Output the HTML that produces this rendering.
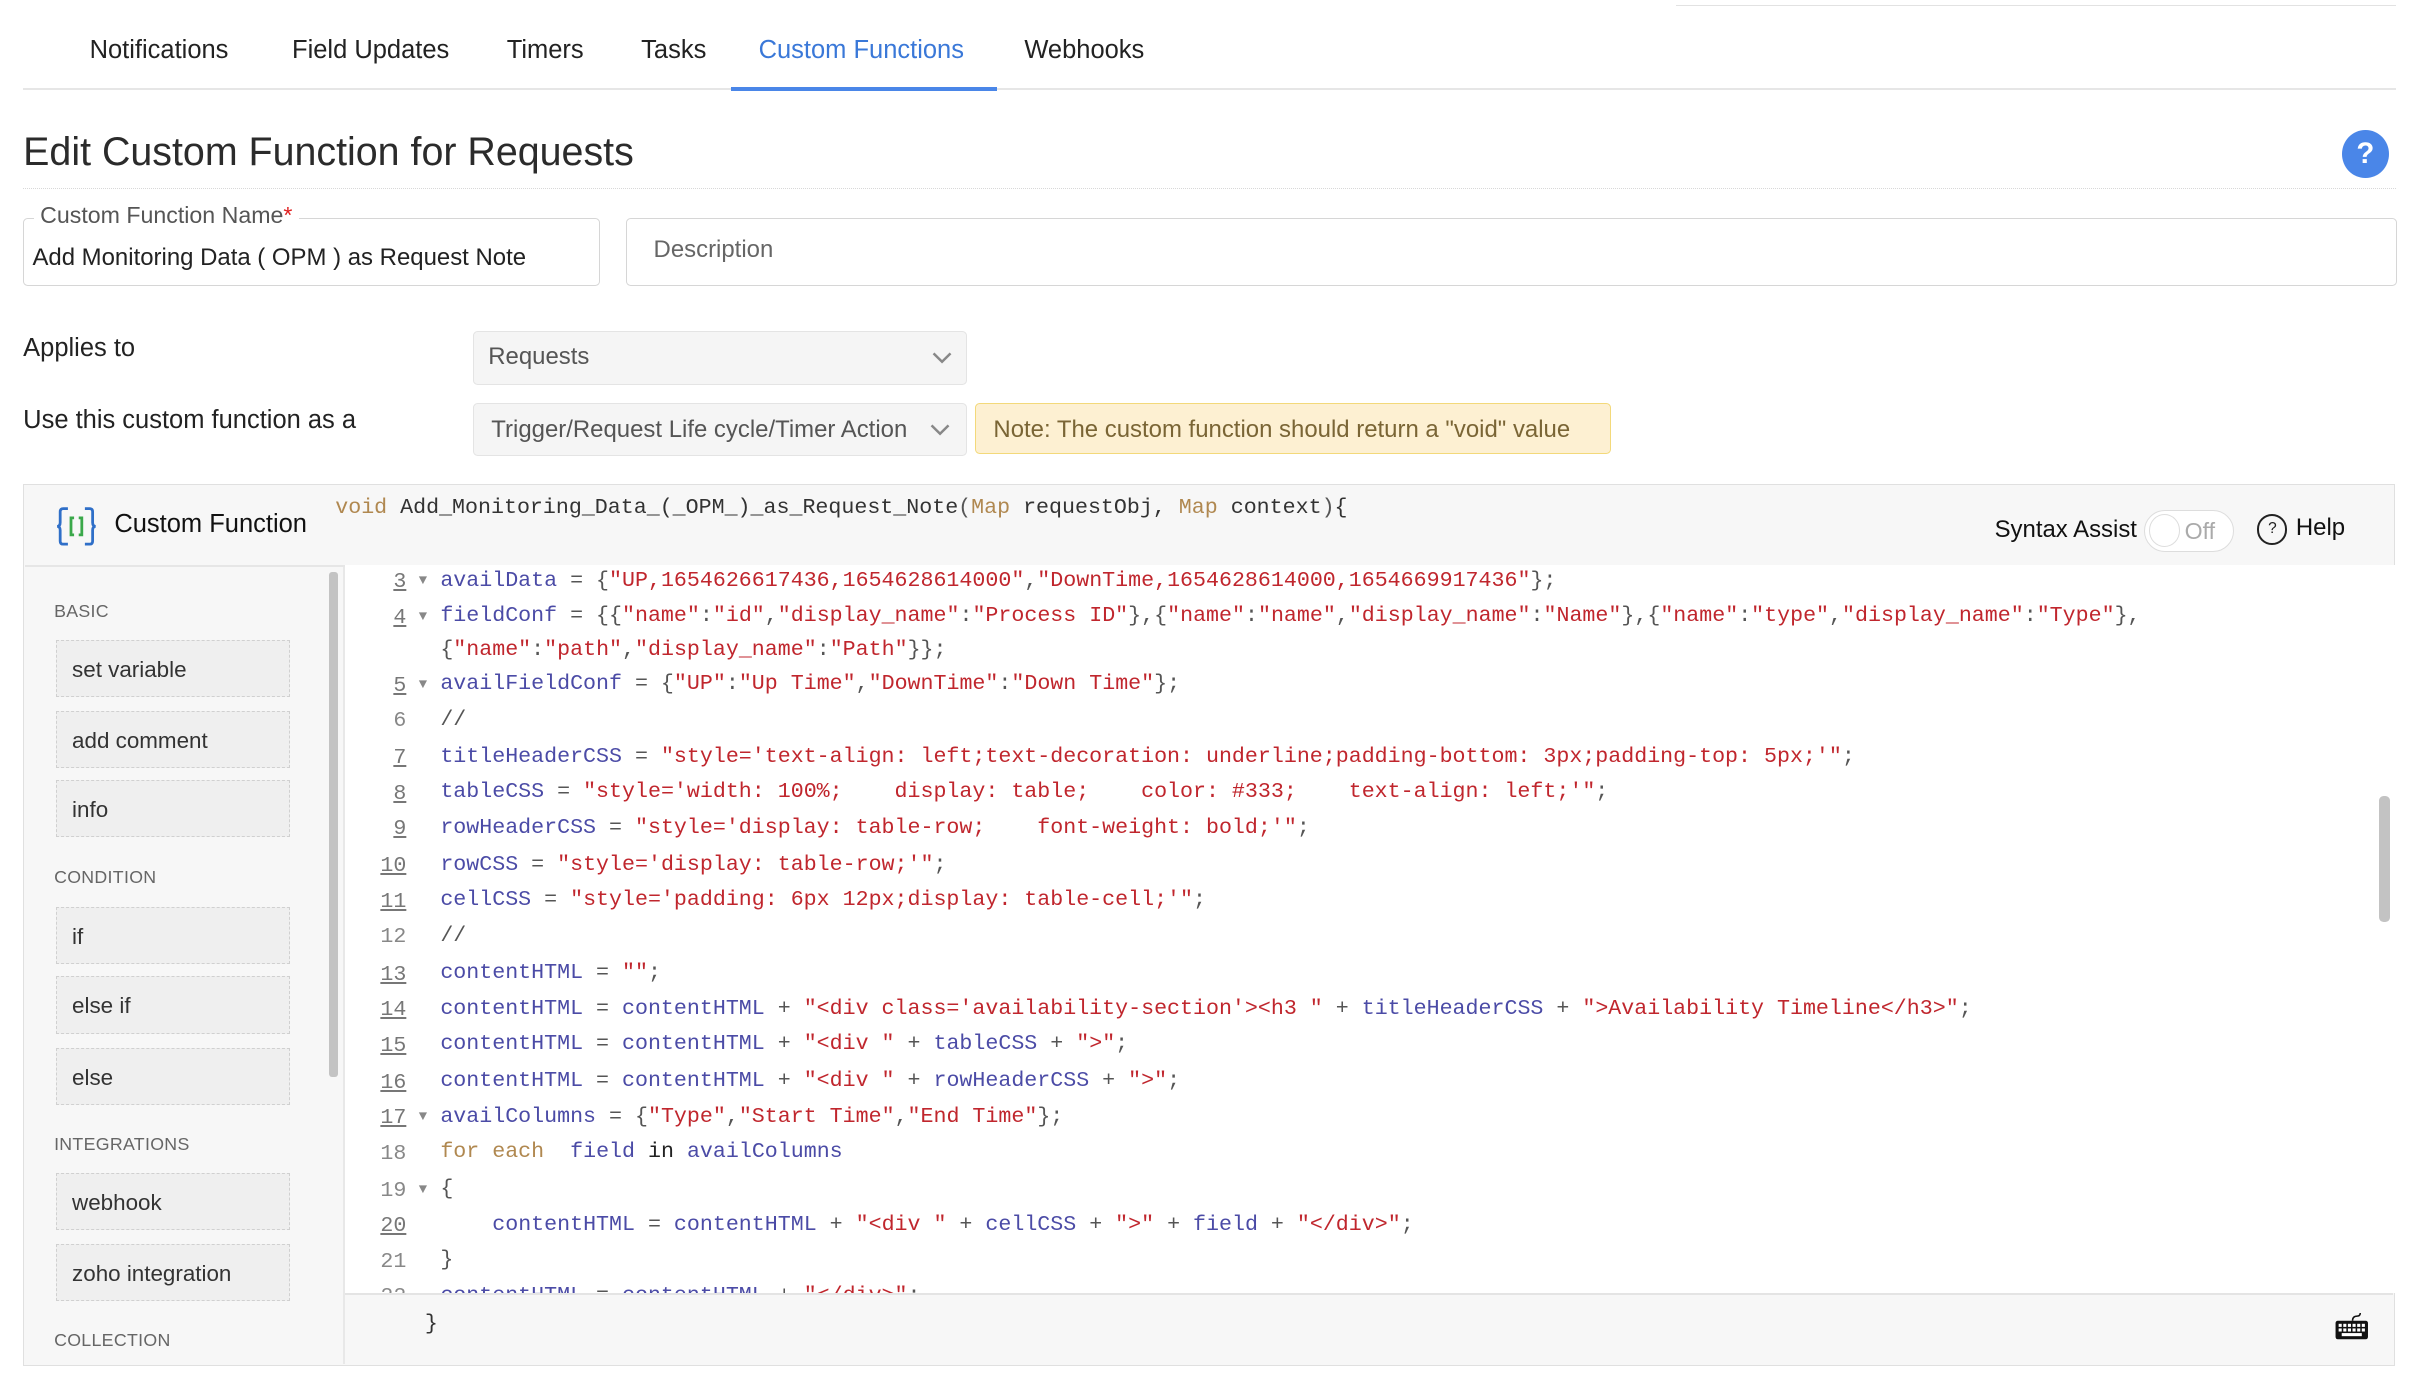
<!DOCTYPE html>
<html><head><meta charset="utf-8">
<style>
html,body{margin:0;padding:0;width:2420px;height:1384px;overflow:hidden;background:#fff;}
#z{zoom:1.545;position:relative;width:1560px;height:892px;font-family:"Liberation Sans",sans-serif;color:#333;}
.a{position:absolute;white-space:nowrap;}
.tab{position:absolute;top:23px;font-size:16.5px;color:#222;}
.code{position:absolute;left:223px;top:366px;width:1327px;height:471px;background:#fff;overflow:hidden;font-family:"Liberation Mono",monospace;font-size:14px;}
.ln{position:absolute;left:0;width:40px;text-align:right;color:#888;font-size:14px;}
.ln.u{text-decoration:underline;color:#777;}
.fa{position:absolute;left:48px;font-size:9px;color:#888;}
.cl{position:absolute;left:62px;white-space:pre;color:#555;}
.v{color:#4b4ba6}.s{color:#c0262d}.k{color:#b08850}.p{color:#555}.b{color:#222}
.btn{position:absolute;left:36px;width:150px;height:37px;background:#efefef;border:1px dashed #d0d0d0;font-size:14.5px;color:#333;line-height:37px;padding-left:10px;box-sizing:border-box;width:152px;}
.hd{position:absolute;left:35px;font-size:11.5px;color:#666;letter-spacing:.2px;}
</style></head><body><div id="z">
<div class="a" style="left:1085px;top:3px;width:466px;height:1px;background:#e2e2e2"></div>
<div class="tab" style="left:58px">Notifications</div>
<div class="tab" style="left:189px">Field Updates</div>
<div class="tab" style="left:328px">Timers</div>
<div class="tab" style="left:415px">Tasks</div>
<div class="tab" style="left:491px;color:#3a78d8">Custom Functions</div>
<div class="tab" style="left:663px">Webhooks</div>
<div class="a" style="left:15px;top:57px;width:1536px;height:1px;background:#e6e6e6"></div>
<div class="a" style="left:473px;top:56px;width:172px;height:3px;background:#4a86e8"></div>

<div class="a" style="left:15px;top:84px;font-size:25.5px;color:#2b2b2b">Edit Custom Function for Requests</div>
<div class="a" style="left:1516px;top:84px;width:30px;height:31px;border-radius:50%;background:#4a86e8;color:#fff;font-weight:bold;font-size:19px;text-align:center;line-height:31px">?</div>
<div class="a" style="left:15px;top:122px;width:1536px;border-top:1px dotted #d8d8d8"></div>

<div class="a" style="left:15px;top:141px;width:372px;height:43px;border:1px solid #d6d6d6;border-radius:3px"></div>
<div class="a" style="left:22px;top:131px;background:#fff;padding:0 4px;font-size:15px;color:#555">Custom Function Name<span style="color:#e02020">*</span></div>
<div class="a" style="left:21px;top:158px;font-size:15.5px;color:#222">Add Monitoring Data ( OPM ) as Request Note</div>
<div class="a" style="left:405px;top:141px;width:1145px;height:43px;border:1px solid #d6d6d6;border-radius:3px"></div>
<div class="a" style="left:423px;top:153px;font-size:15.5px;color:#666">Description</div>

<div class="a" style="left:15px;top:216px;font-size:16.5px;color:#222">Applies to</div>
<div class="a" style="left:306px;top:214px;width:320px;height:35px;background:#f5f5f5;border:1px solid #e4e4e4;border-radius:3px;box-sizing:border-box"></div>
<div class="a" style="left:316px;top:222px;font-size:15.5px;color:#555">Requests</div>
<svg class="a" style="left:603px;top:227px" width="13" height="9" viewBox="0 0 13 9"><path d="M1 1.5 L6.5 7 L12 1.5" fill="none" stroke="#888" stroke-width="1.6"/></svg>

<div class="a" style="left:15px;top:263px;font-size:16.5px;color:#222">Use this custom function as a</div>
<div class="a" style="left:306px;top:261px;width:320px;height:34px;background:#f5f5f5;border:1px solid #e4e4e4;border-radius:3px;box-sizing:border-box"></div>
<div class="a" style="left:318px;top:269px;font-size:15.5px;color:#555">Trigger/Request Life cycle/Timer Action</div>
<svg class="a" style="left:602px;top:274px" width="13" height="9" viewBox="0 0 13 9"><path d="M1 1.5 L6.5 7 L12 1.5" fill="none" stroke="#888" stroke-width="1.6"/></svg>
<div class="a" style="left:631px;top:261px;width:412px;height:33px;background:#fdf0d2;border:1px solid #f3d97a;border-radius:3px;box-sizing:border-box"></div>
<div class="a" style="left:643px;top:269px;font-size:15.5px;color:#7a6535">Note: The custom function should return a "void" value</div>

<div class="a" style="left:15px;top:313px;width:1535px;height:571px;border:1px solid #e0e0e0;background:#f7f7f7;box-sizing:border-box"></div>
<div class="a" style="left:16px;top:366px;width:1534px;height:1px;background:#e6e6e6"></div>
<svg class="a" style="left:35px;top:326px" width="29" height="29" viewBox="0 0 29 29">
<path d="M9 3 H6 Q4 3 4 5 V12 Q4 14.5 2 14.5 Q4 14.5 4 17 V24 Q4 26 6 26 H9" fill="none" stroke="#2f6fc8" stroke-width="1.8"/>
<path d="M20 3 H23 Q25 3 25 5 V12 Q25 14.5 27 14.5 Q25 14.5 25 17 V24 Q25 26 23 26 H20" fill="none" stroke="#2f6fc8" stroke-width="1.8"/>
<path d="M13 9 H11 V20 H13 M16 9 H18 V20 H16" fill="none" stroke="#3aa84a" stroke-width="1.8"/></svg>
<div class="a" style="left:74px;top:330px;font-size:16.5px;color:#111">Custom Function</div>
<div class="a" style="left:217px;top:321px;font-family:'Liberation Mono',monospace;font-size:14px;color:#333;white-space:pre"><span class="k">void</span> Add_Monitoring_Data_(_OPM_)_as_Request_Note<span class="p">(</span><span class="k">Map</span> requestObj, <span class="k">Map</span> context<span class="p">)</span>{</div>
<div class="a" style="left:1291px;top:334px;font-size:15.5px;color:#111">Syntax Assist</div>
<div class="a" style="left:1388px;top:330px;width:58px;height:27px;border:1px solid #ddd;border-radius:14px;background:#fff;box-sizing:border-box"></div>
<div class="a" style="left:1391px;top:333px;width:19px;height:20px;border:1px solid #ddd;border-radius:50%;background:#fff"></div>
<div class="a" style="left:1414px;top:335px;font-size:15px;color:#aaa">Off</div>
<div class="a" style="left:1461px;top:333px;width:17px;height:17px;border:1.3px solid #222;border-radius:50%;font-size:10px;text-align:center;line-height:17px;color:#222">?</div>
<div class="a" style="left:1486px;top:333px;font-size:15.5px;color:#111">Help</div>

<div class="a" style="left:213px;top:370px;width:6px;height:327px;background:#c3c3c3;border-radius:2px"></div>
<div class="a" style="left:222px;top:367px;width:1px;height:516px;background:#e8e8e8"></div>
<div class="hd" style="top:389px">BASIC</div>
<div class="btn" style="top:414px">set variable</div>
<div class="btn" style="top:460px">add comment</div>
<div class="btn" style="top:505px">info</div>
<div class="hd" style="top:561px">CONDITION</div>
<div class="btn" style="top:587px">if</div>
<div class="btn" style="top:632px">else if</div>
<div class="btn" style="top:678px">else</div>
<div class="hd" style="top:734px">INTEGRATIONS</div>
<div class="btn" style="top:759px">webhook</div>
<div class="btn" style="top:805px">zoho integration</div>
<div class="hd" style="top:861px">COLLECTION</div>

<div class="code">
<div class="ln u" style="top:3px">3</div><div class="fa" style="top:5px">▼</div>
<div class="cl" style="top:2px"><span class="v">availData</span> = {<span class="s">"UP,1654626617436,1654628614000"</span>,<span class="s">"DownTime,1654628614000,1654669917436"</span>};</div>
<div class="ln u" style="top:26px">4</div><div class="fa" style="top:28px">▼</div>
<div class="cl" style="top:25px"><span class="v">fieldConf</span> = {{<span class="s">"name"</span>:<span class="s">"id"</span>,<span class="s">"display_name"</span>:<span class="s">"Process ID"</span>},{<span class="s">"name"</span>:<span class="s">"name"</span>,<span class="s">"display_name"</span>:<span class="s">"Name"</span>},{<span class="s">"name"</span>:<span class="s">"type"</span>,<span class="s">"display_name"</span>:<span class="s">"Type"</span>},</div>
<div class="cl" style="top:47px">{<span class="s">"name"</span>:<span class="s">"path"</span>,<span class="s">"display_name"</span>:<span class="s">"Path"</span>}};</div>
<div class="ln u" style="top:70px">5</div><div class="fa" style="top:72px">▼</div>
<div class="cl" style="top:69px"><span class="v">availFieldConf</span> = {<span class="s">"UP"</span>:<span class="s">"Up Time"</span>,<span class="s">"DownTime"</span>:<span class="s">"Down Time"</span>};</div>
<div class="ln" style="top:93px">6</div>
<div class="cl" style="top:92px">//</div>
<div class="ln u" style="top:117px">7</div>
<div class="cl" style="top:116px"><span class="v">titleHeaderCSS</span> = <span class="s">"style='text-align: left;text-decoration: underline;padding-bottom: 3px;padding-top: 5px;'"</span>;</div>
<div class="ln u" style="top:140px">8</div>
<div class="cl" style="top:139px"><span class="v">tableCSS</span> = <span class="s">"style='width: 100%;    display: table;    color: #333;    text-align: left;'"</span>;</div>
<div class="ln u" style="top:163px">9</div>
<div class="cl" style="top:162px"><span class="v">rowHeaderCSS</span> = <span class="s">"style='display: table-row;    font-weight: bold;'"</span>;</div>
<div class="ln u" style="top:187px">10</div>
<div class="cl" style="top:186px"><span class="v">rowCSS</span> = <span class="s">"style='display: table-row;'"</span>;</div>
<div class="ln u" style="top:210px">11</div>
<div class="cl" style="top:209px"><span class="v">cellCSS</span> = <span class="s">"style='padding: 6px 12px;display: table-cell;'"</span>;</div>
<div class="ln" style="top:233px">12</div>
<div class="cl" style="top:232px">//</div>
<div class="ln u" style="top:257px">13</div>
<div class="cl" style="top:256px"><span class="v">contentHTML</span> = <span class="s">""</span>;</div>
<div class="ln u" style="top:280px">14</div>
<div class="cl" style="top:279px"><span class="v">contentHTML</span> = <span class="v">contentHTML</span> + <span class="s">"&lt;div class='availability-section'&gt;&lt;h3 "</span> + <span class="v">titleHeaderCSS</span> + <span class="s">"&gt;Availability Timeline&lt;/h3&gt;"</span>;</div>
<div class="ln u" style="top:303px">15</div>
<div class="cl" style="top:302px"><span class="v">contentHTML</span> = <span class="v">contentHTML</span> + <span class="s">"&lt;div "</span> + <span class="v">tableCSS</span> + <span class="s">"&gt;"</span>;</div>
<div class="ln u" style="top:327px">16</div>
<div class="cl" style="top:326px"><span class="v">contentHTML</span> = <span class="v">contentHTML</span> + <span class="s">"&lt;div "</span> + <span class="v">rowHeaderCSS</span> + <span class="s">"&gt;"</span>;</div>
<div class="ln u" style="top:350px">17</div><div class="fa" style="top:352px">▼</div>
<div class="cl" style="top:349px"><span class="v">availColumns</span> = {<span class="s">"Type"</span>,<span class="s">"Start Time"</span>,<span class="s">"End Time"</span>};</div>
<div class="ln" style="top:373px">18</div>
<div class="cl" style="top:372px"><span class="k">for each</span>  <span class="v">field</span> <span class="b">in</span> <span class="v">availColumns</span></div>
<div class="ln" style="top:397px">19</div><div class="fa" style="top:399px">▼</div>
<div class="cl" style="top:396px">{</div>
<div class="ln u" style="top:420px">20</div>
<div class="cl" style="top:419px">    <span class="v">contentHTML</span> = <span class="v">contentHTML</span> + <span class="s">"&lt;div "</span> + <span class="v">cellCSS</span> + <span class="s">"&gt;"</span> + <span class="v">field</span> + <span class="s">"&lt;/div&gt;"</span>;</div>
<div class="ln" style="top:443px">21</div>
<div class="cl" style="top:442px">}</div>
<div class="ln" style="top:466px">22</div>
<div class="cl" style="top:465px"><span class="v">contentHTML</span> = <span class="v">contentHTML</span> + <span class="s">"&lt;/div&gt;"</span>;</div>
<div class="a" style="left:1317px;top:149px;width:7px;height:82px;background:#c3c3c3;border-radius:3px"></div>
</div>
<div class="a" style="left:223px;top:837px;width:1326px;height:1px;background:#e4e4e4"></div>
<div class="a" style="left:275px;top:849px;font-family:'Liberation Mono',monospace;font-size:14px;color:#333">}</div>
<svg class="a" style="left:1511px;top:850px" width="23" height="18" viewBox="0 0 23 18">
<path d="M12 5 Q12 2 15 2 Q17 2 17 0" fill="none" stroke="#111" stroke-width="1"/>
<rect x="1" y="5" width="21" height="12" rx="1.5" fill="#111"/>
<g fill="#fff"><rect x="3" y="7" width="2" height="2"/><rect x="6" y="7" width="2" height="2"/><rect x="9" y="7" width="2" height="2"/><rect x="12" y="7" width="2" height="2"/><rect x="15" y="7" width="2" height="2"/><rect x="18" y="7" width="2" height="2"/>
<rect x="3" y="10" width="2" height="2"/><rect x="6" y="10" width="2" height="2"/><rect x="9" y="10" width="2" height="2"/><rect x="12" y="10" width="2" height="2"/><rect x="15" y="10" width="2" height="2"/><rect x="18" y="10" width="2" height="2"/>
<rect x="5" y="13" width="13" height="2"/></g></svg>
</div></body></html>
